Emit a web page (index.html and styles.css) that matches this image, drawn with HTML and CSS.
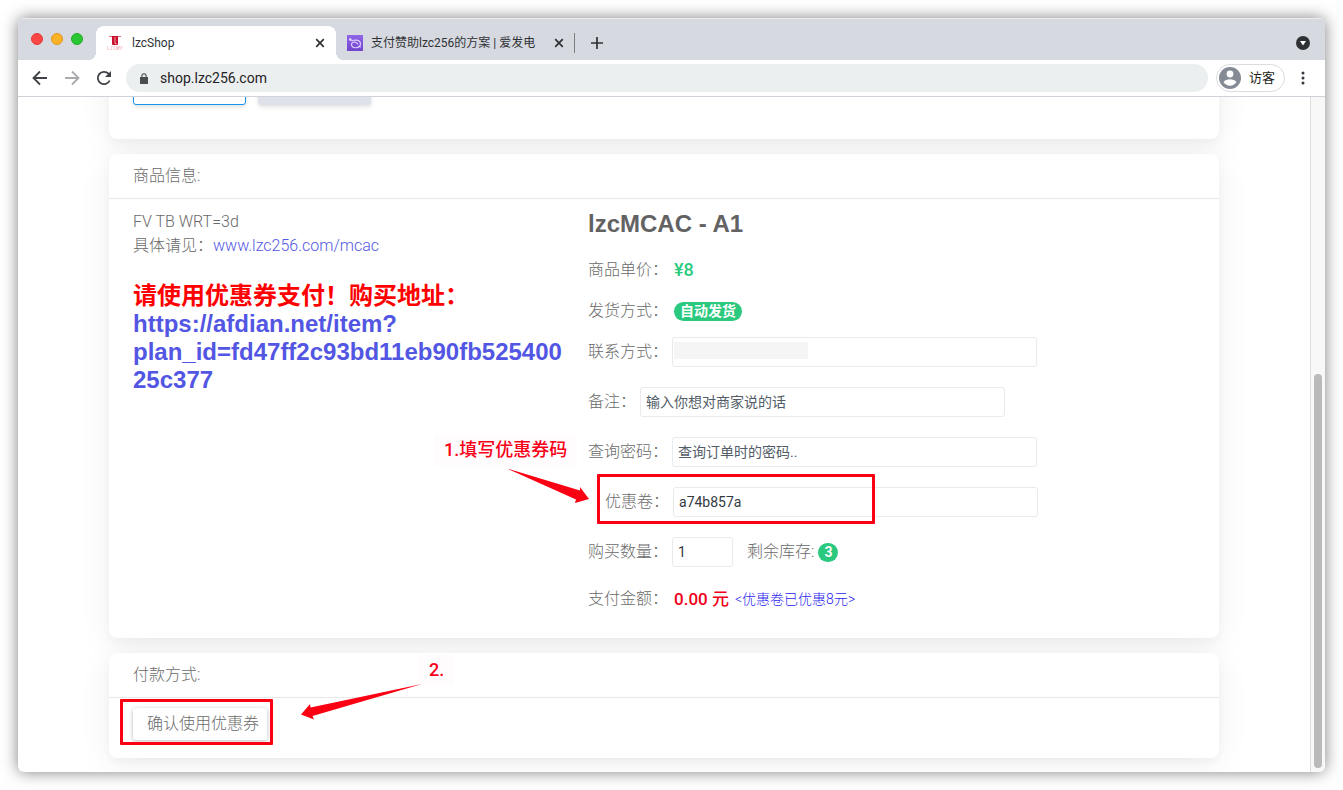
FILE: index.html
```html
<!DOCTYPE html>
<html lang="zh-CN">
<head>
<meta charset="utf-8">
<meta name="viewport" content="width=device-width, initial-scale=1">
<title>lzcShop</title>
<link rel="stylesheet" href="styles.css">
</head>
<body>
<div class="window">
  <header class="tabstrip">
    <div class="lights"><span class="light light-red"></span><span class="light light-amber"></span><span class="light light-green"></span></div>
    <div class="tab tab-active">
      <svg class="favicon" viewBox="0 0 16 16" aria-hidden="true"><path d="M2 1.500h3M11 1.500h3" stroke="#e56a7c"/><path d="M5 1h6v8.500l-1 .5H6l-1-.5z" fill="#c8102e"/><path d="M8 2v6.500h1.500" fill="none" stroke="#f7c6cc" stroke-width=".8"/><path d="M.5 11v3.500h2M3.500 11.500h2l-2 3h2M8.500 11.500H7v3h1.500M9.500 15v-3.500h1V15M11.500 15v-3.500h1v2M13.800 15v-3.500h1.200v2" fill="none" stroke="#f6bcc0" stroke-width=".7"/></svg>
      <span class="tab-title">lzcShop</span>
      <button class="close" aria-label="关闭标签页"><svg viewBox="0 0 10 10"><path d="M1.200 1.200l7.600 7.600M8.800 1.200L1.200 8.800"/></svg></button>
    </div>
    <div class="tab tab-idle">
      <svg class="favicon" viewBox="0 0 16 16" aria-hidden="true"><defs><linearGradient id="fav" x2="0" y2="1"><stop stop-color="#9266e8"/><stop offset="1" stop-color="#6f45cf"/></linearGradient></defs><path fill="url(#fav)" d="M0 0h16v16H0z"/><g fill="none" stroke="#e4d4ff" stroke-width="1.100" stroke-linecap="round"><path d="M3 4.500l2 1 3.500-.5c3 0 5 1.500 5 3.800 0 2.500-2.500 4.200-5 4-2.500-.1-4.200-1.600-4-3.500.2-1.500 1.500-2.500 3-2.300 1.500.3 2.800 1 3.200 2M11.500 11.500l2 .5"/><circle cx="3.200" cy="4.500" r=".7" fill="#fff"/></g></svg>
      <span class="tab-title">支付赞助lzc256的方案 | 爱发电</span>
      <button class="close" aria-label="关闭标签页"><svg viewBox="0 0 10 10"><path d="M1.200 1.200l7.600 7.600M8.800 1.200L1.200 8.800"/></svg></button>
    </div>
    <button class="new-tab" aria-label="新标签页"><svg viewBox="0 0 12 12"><path d="M6 0v12M0 6h12"/></svg></button>
    <button class="tab-search" aria-label="搜索标签页"><svg viewBox="0 0 14 14"><circle cx="7" cy="7" r="7" fill="#2e3134"/><path d="M4 5h6L7 9.500z" fill="#fff"/></svg></button>
  </header>
  <nav class="toolbar">
    <button class="nav-btn" aria-label="后退"><svg viewBox="0 0 16 16"><path d="M15 8H2M8 1.500L1.500 8 8 14.500"/></svg></button>
    <button class="nav-btn nav-off" aria-label="前进"><svg viewBox="0 0 16 16"><path d="M1 8h13M8 1.500L14.500 8 8 14.500"/></svg></button>
    <button class="nav-btn" aria-label="重新加载"><svg viewBox="0 0 16 16"><path d="M13.700 10.500A6.200 6.200 0 1 1 12.500 3.700L14 5.200"/><path d="M15 1v6H9z" fill="#3f4347" stroke="none"/></svg></button>
    <div class="omnibox">
      <svg class="lock" viewBox="0 0 8 11"><path d="M0 4h8v7H0z" fill="#4a4d50"/><path d="M1.900 4.500V2.900a2.100 2.100 0 0 1 4.200 0v1.600" fill="none" stroke="#4a4d50" stroke-width="1.100"/></svg>
      <input class="url" aria-label="地址" value="shop.lzc256.com">
    </div>
    <button class="profile"><svg viewBox="0 0 22 22"><circle cx="11" cy="11" r="11" fill="#858b94"/><circle cx="11" cy="7" r="3.400" fill="#fff"/><path d="M4.600 15.200c1-2.300 4-3 6.400-3s5.400.7 6.400 3c-1.500 2.300-3.800 3.500-6.400 3.500s-4.900-1.200-6.400-3.500z" fill="#fff"/></svg><span>访客</span></button>
    <button class="more" aria-label="更多"><svg viewBox="0 0 4 14"><circle cx="2" cy="2" r="1.500"/><circle cx="2" cy="7" r="1.500"/><circle cx="2" cy="12" r="1.500"/></svg></button>
  </nav>
  <div class="viewport">
    <main class="page">
      <section class="card card-top">
        <button class="choice choice-on" aria-label="选项一"></button>
        <button class="choice" aria-label="选项二"></button>
      </section>

      <section class="card">
        <h2 class="card-head">商品信息:</h2>
        <div class="product">
          <div class="about">
            <p class="text">FV TB WRT=3d<br>具体请见：<a class="link" href="#mcac">www.lzc256.com/mcac</a></p>
            <h3 class="notice">请使用优惠券支付！购买地址：<br><a class="link" href="#item">https://afdian.net/item?<br>plan_id=fd47ff2c93bd11eb90fb525400<br>25c377</a></h3>
          </div>
          <form class="order">
            <h3 class="name">lzcMCAC - A1</h3>
            <div class="row info"><span>商品单价：</span><strong class="price">¥8</strong></div>
            <div class="row info"><span>发货方式：</span><span class="badge">自动发货</span></div>
            <div class="row"><label for="contact">联系方式：</label><div class="field-wrap"><input class="field" id="contact"><span class="redacted"></span></div></div>
            <div class="row"><label for="note">备注：</label><input class="field" id="note" placeholder="输入你想对商家说的话"></div>
            <div class="row"><label for="pwd">查询密码：</label><input class="field" id="pwd" placeholder="查询订单时的密码.."></div>
            <div class="row coupon"><label for="code">优惠卷：</label><input class="field" id="code" value="a74b857a">
              <span class="frame frame-coupon"></span>
              <span class="tip tip-one">1.填写优惠券码</span>
              <svg class="arrow arrow-one" viewBox="0 0 82 36"><path d="M0 .5L73 22.500V19l9 12-14 4 1-3.500z"/></svg>
            </div>
            <div class="row"><label for="qty">购买数量：</label><input class="field qty" id="qty" value="1"><span class="stock">剩余库存:</span><span class="badge badge-count">3</span></div>
            <div class="row total"><span>支付金额：</span><strong class="amount">0.00 元</strong><span class="saved">&lt;优惠卷已优惠8元&gt;</span></div>
          </form>
        </div>
      </section>

      <section class="card pay">
        <h2 class="card-head">付款方式:</h2>
        <div class="pay-body"><button class="confirm">确认使用优惠券</button></div>
        <span class="frame frame-pay"></span>
        <span class="tip tip-two">2.</span>
        <svg class="arrow arrow-two" viewBox="0 0 121 36"><path d="M121 0L9.500 23.500 9 20 0 30.500l13 5-1.500-3.500z"/></svg>
      </section>
    </main>
    <div class="scrollbar"><div class="thumb"></div></div>
  </div>
</div>
</body>
</html>
```

FILE: styles.css
```css
* { box-sizing: border-box; }
body {
  margin: 0;
  height: 100vh;
  padding: 18px;
  background: #fff;
  color: #6a6a6a;
  font: 300 16px/24px Roboto, "Noto Sans CJK SC", sans-serif;
}
button, input { font: inherit; color: inherit; }
button { padding: 0; border: 0; background: none; }
svg { display: block; flex: none; }
h2, h3, p { margin: 0; }

.window {
  display: flex;
  flex-direction: column;
  height: 100%;
  min-height: 754px;
  border-radius: 6px;
  overflow: hidden;
  background: #fff;
  box-shadow: 0 0 16px rgba(0, 0, 0, .5);
}

/* tab strip */
.tabstrip {
  display: flex;
  align-items: flex-end;
  height: 42px;
  background: #d6d9e0;
  border-top: 1px solid #e9ebee;
  color: #303336;
}
.lights { display: flex; gap: 8px; padding: 0 13px; height: 27px; }
.light { width: 12px; height: 12px; border-radius: 50%; }
.light-red { background: #fc4645; border: 1px solid #e23b3b; }
.light-amber { background: #fdb125; border: 1px solid #e09a1c; }
.light-green { background: #2ac732; border: 1px solid #20ac28; }
.tab {
  display: flex;
  align-items: center;
  width: 240px;
  height: 34px;
  padding: 0 11px;
  font-size: 12px;
  font-weight: 400;
}
.tab-idle { width: 238px; padding-right: 10px; }
.tab-active {
  position: relative;
  border-radius: 8px 8px 0 0;
  background: #fff;
}
.tab-active::before, .tab-active::after {
  content: "";
  position: absolute;
  bottom: 0;
  width: 8px;
  height: 8px;
}
.tab-active::before { left: -8px; background: radial-gradient(circle at 0 0, #d6d9e0 8px, #fff 8px); }
.tab-active::after { right: -8px; background: radial-gradient(circle at 100% 0, #d6d9e0 8px, #fff 8px); }
.favicon { width: 16px; height: 16px; }
.tab-title { flex: 1; margin-left: 8px; white-space: nowrap; }
.tab-active .tab-title { margin-left: 9px; }
.close svg { width: 10px; height: 10px; }
.close path, .new-tab path { fill: none; stroke: #2f3235; stroke-width: 1.7; }
.new-tab {
  display: flex;
  align-items: center;
  height: 20px;
  margin-bottom: 7px;
  padding-left: 16px;
  border-left: 1px solid #7c7f84;
}
.new-tab svg { width: 12px; height: 12px; }
.tab-search { margin: 0 15px 10px auto; }
.tab-search svg { width: 14px; height: 14px; }

/* toolbar */
.toolbar {
  display: flex;
  align-items: center;
  gap: 16px;
  height: 37px;
  padding: 0 18px 0 14px;
  border-bottom: 1px solid #cfd2d8;
}
.nav-btn svg { width: 16px; height: 16px; fill: none; stroke: #3f4347; stroke-width: 1.8; }
.nav-off svg { stroke: #a9abae; }
.omnibox {
  display: flex;
  align-items: center;
  flex: 1;
  height: 28px;
  margin: 0 -8px 0 -2px;
  padding: 0 14px;
  border-radius: 14px;
  background: #ebeff0;
}
.lock { width: 8px; height: 11px; }
.url {
  flex: 1;
  margin-left: 12px;
  padding: 0;
  border: 0;
  outline: 0;
  background: none;
  color: #1f2124;
  font-size: 14px;
  font-weight: 400;
}
.profile {
  display: flex;
  align-items: center;
  gap: 8px;
  height: 28px;
  padding: 0 9px 0 2px;
  border: 1px solid #dadcdf;
  border-radius: 14px;
  color: #1d1f21;
  font-size: 13px;
  font-weight: 400;
}
.profile svg { width: 22px; height: 22px; }
.more { width: 8px; margin-left: -2px; }
.more svg { width: 4px; height: 14px; margin: 0 auto; fill: #33363a; }

/* page */
.viewport { display: flex; flex: 1; min-height: 0; overflow: hidden; }
.page { flex: 1; min-width: 0; padding: 0 91px; }
.scrollbar {
  width: 15px;
  padding: 277px 3px 4px;
  border-left: 1px solid #dedede;
  background: #f8f8f8;
}
.thumb { width: 8px; height: 100%; border-radius: 4px; background: #bababa; }
.card {
  position: relative;
  margin-bottom: 15px;
  border-radius: 8px;
  background: #fff;
  box-shadow: 0 5px 32px rgba(0, 0, 0, .07), 0 4px 8px rgba(0, 0, 0, .03);
}
.card-top {
  display: flex;
  gap: 12px;
  margin-top: -32px;
  padding: 0 24px 34px;
}
.choice {
  width: 113px;
  height: 40px;
  border-radius: 3px;
  background: #dee2e8;
  box-shadow: 0 2px 4px rgba(0, 0, 0, .12);
}
.choice-on { background: #fff; border: 1px solid #1595ee; }
.card-head {
  padding: 10px 24px;
  border-bottom: 1px solid #e8e8e8;
  font-size: 16px;
  font-weight: 300;
}
.product {
  display: grid;
  gap: 30px;
  grid-template-columns: minmax(0, 425fr) minmax(0, 607fr);
  padding: 11px 24px 27px;
}
.link { color: #5256e3; text-decoration: none; }
.notice {
  margin-top: 24px;
  color: #f00;
  font: bold 24px/28px "Liberation Sans", "Noto Sans CJK SC", sans-serif;
}
.name {
  margin-bottom: 17px;
  font: bold 24px/28px "Liberation Sans", sans-serif;
  color: #626262;
}
.row { display: flex; align-items: center; min-height: 30px; margin-bottom: 20px; gap: 4px; }
.info { margin-bottom: 11px; gap: 6px; }
.price { color: #2acb80; font-size: 18px; font-weight: 500; }
.badge {
  padding: 0 6px;
  border-radius: 10px;
  background: #2ac97e;
  color: #fff;
  font-size: 14px;
  font-weight: 700;
  line-height: 19px;
}
.field-wrap { position: relative; }
.redacted { position: absolute; left: 2px; top: 5px; width: 134px; height: 17px; background: #f5f5f5; }
.field {
  display: block;
  width: 365px;
  height: 30px;
  padding: 0 5px;
  border: 1px solid #e9eaec;
  border-radius: 3px;
  outline: 0;
  background: #fff;
  color: #343a40;
  font-size: 14px;
  font-weight: 400;
}
.field::placeholder { color: #525c66; opacity: 1; }
.coupon { position: relative; padding-left: 17px; }
.qty { width: 61px; }
.stock { margin-left: 10px; }
.total { min-height: 24px; margin-bottom: 0; gap: 6px; }
.amount { color: #f00018; font-size: 17px; font-weight: 500; }
.saved { color: #2a1df0; font-size: 14px; }

/* payment */
.pay { margin-bottom: 0; }
.pay-body { padding: 10px 24px 18px; }
.confirm {
  display: block;
  height: 32px;
  padding: 0 8px 0 14px;
  border-radius: 3px;
  box-shadow: 0 1px 4px rgba(0, 0, 0, .28);
}

/* annotations */
.frame { position: absolute; border: 3px solid #fb0012; border-radius: 1px; pointer-events: none; }
.frame-coupon { left: 9px; top: -13px; width: 278px; height: 50px; }
.frame-pay { left: 11px; top: 46px; width: 153px; height: 46px; }
.tip {
  position: absolute;
  padding: 4px 10px;
  border-radius: 4px;
  background: #fffcfd;
  color: #f70018;
  font-size: 18px;
  font-weight: 500;
  white-space: nowrap;
}
.tip-one { left: -154px; top: -53px; }
.tip-two { left: 310px; top: 1px; }
.arrow { position: absolute; fill: #fb0012; }
.arrow-one { left: -81px; top: -19px; width: 82px; height: 36px; }
.arrow-two { left: 192px; top: 31px; width: 121px; height: 36px; }
```
